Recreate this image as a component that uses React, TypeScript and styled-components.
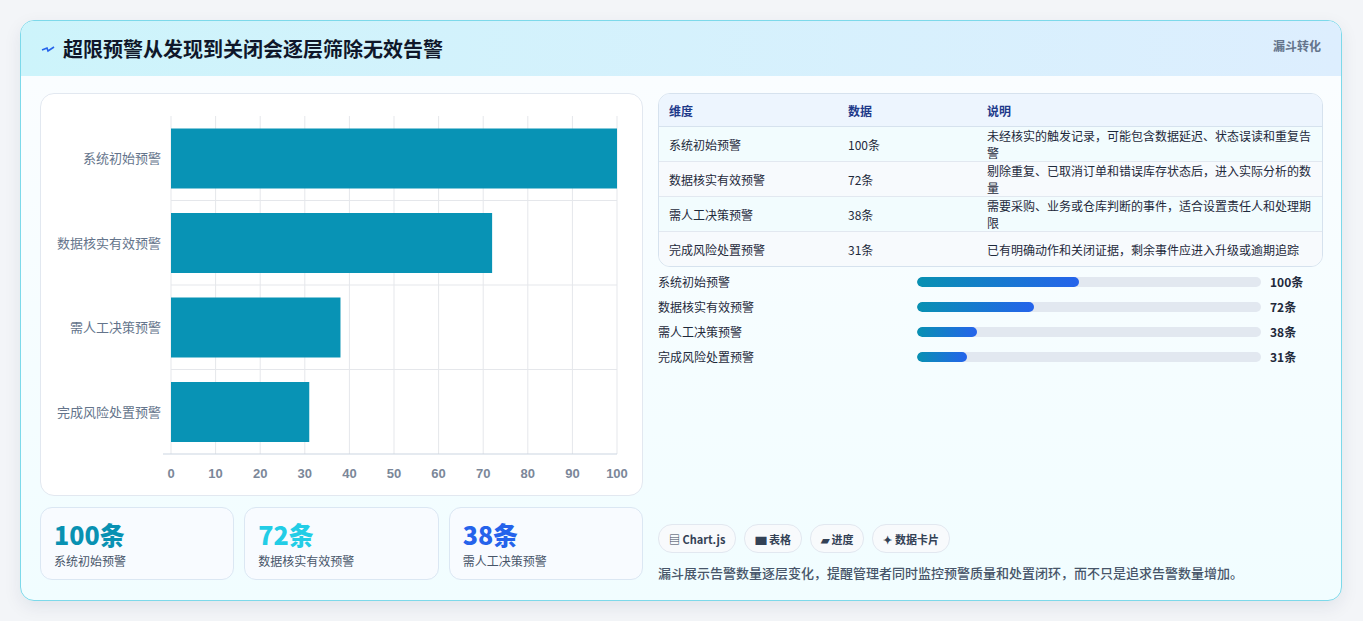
import React from "react";
import styled, { createGlobalStyle } from "styled-components";

const rows = [
  { name: "系统初始预警", value: 100, note: "未经核实的触发记录，可能包含数据延迟、状态误读和重复告警", pct: 47 },
  { name: "数据核实有效预警", value: 72, note: "剔除重复、已取消订单和错误库存状态后，进入实际分析的数量", pct: 34 },
  { name: "需人工决策预警", value: 38, note: "需要采购、业务或仓库判断的事件，适合设置责任人和处理期限", pct: 17.5 },
  { name: "完成风险处置预警", value: 31, note: "已有明确动作和关闭证据，剩余事件应进入升级或逾期追踪", pct: 14.5 },
];

const Global = createGlobalStyle`
  body { margin: 0; background: #f3f5f8; font-family: "Noto Sans CJK SC", "Noto Sans", sans-serif; }
`;

const Page = styled.div`
  height: 621px;
  padding: 20px 21px 0 20px;
  box-sizing: border-box;
`;
const Card = styled.div`
  height: 579px;
  border: 1px solid #7dd9ea;
  border-radius: 14px;
  overflow: hidden;
  background: linear-gradient(180deg, #fbfdff 0%, #f1fdff 100%);
  box-shadow: 0 6px 18px rgba(15, 40, 80, 0.08);
  display: flex;
  flex-direction: column;
`;
const Header = styled.div`
  height: 55px;
  flex-shrink: 0;
  display: flex;
  align-items: center;
  justify-content: space-between;
  padding: 0 20px 0 20px;
  background: linear-gradient(90deg, #cdf4fb 0%, #ddeefe 100%);
`;
const Title = styled.h1`
  margin: 0;
  font-size: 20px;
  font-weight: 700;
  color: #0f172a;
  display: flex;
  align-items: center;
  gap: 8px;
`;
const Tag = styled.span`
  font-size: 12px;
  font-weight: 700;
  color: #64748b;
  align-self: flex-start;
  margin-top: 16px;
`;
const Body = styled.div`
  flex: 1;
  display: grid;
  grid-template-columns: 603px 1fr;
  gap: 15px;
  padding: 17px 18px 18px 19px;
`;
const Col = styled.div`
  display: flex;
  flex-direction: column;
  gap: 11px;
`;
const ChartBox = styled.div`
  height: 403px;
  background: #fff;
  border: 1px solid #e2e8f0;
  border-radius: 14px;
  box-sizing: border-box;
`;
const Kpis = styled.div`
  display: grid;
  grid-template-columns: repeat(3, 1fr);
  gap: 10px;
`;
const Kpi = styled.div`
  height: 73px;
  box-sizing: border-box;
  border: 1px solid #dbe7f3;
  border-radius: 12px;
  background: #f8fbff;
  padding: 10px 13px;
`;
const KpiVal = styled.div<{ $c: string }>`
  font-size: 25px;
  font-weight: 800;
  line-height: 32px;
  color: ${(p) => p.$c};
  font-family: "Noto Sans CJK SC", sans-serif;
`;
const KpiLabel = styled.div`
  font-size: 12px;
  color: #475569;
  margin-top: 2px;
`;
const Table = styled.table`
  width: 100%;
  border-collapse: separate;
  border-spacing: 0;
  border: 1px solid #d6e2ee;
  border-radius: 12px;
  overflow: hidden;
  font-size: 12px;
  color: #1e293b;
`;
const Th = styled.th<{ $w?: number }>`
  text-align: left;
  font-weight: 700;
  color: #1e3a8a;
  height: 32px;
  padding: 0 10px;
  background: #edf5fe;
  border-bottom: 1px solid #d6e2ee;
  width: ${(p) => (p.$w ? p.$w + "px" : "auto")};
`;
const Td = styled.td<{ $alt: boolean; $last: boolean }>`
  height: 34px;
  padding: 0 10px;
  background: ${(p) => (p.$alt ? "#f7fafd" : "#f2fcfe")};
  border-bottom: ${(p) => (p.$last ? "none" : "1px solid #e2e8f0")};
`;
const Progress = styled.div`
  display: flex;
  flex-direction: column;
  gap: 9px;
  margin-top: 6px;
`;
const PRow = styled.div`
  display: grid;
  grid-template-columns: 250px 344px 1fr;
  gap: 9px;
  align-items: center;
  font-size: 12px;
  color: #1e293b;
  height: 16px;
`;
const Track = styled.div`
  height: 10px;
  border-radius: 5px;
  background: #e2e8f0;
  overflow: hidden;
`;
const Fill = styled.div`
  height: 100%;
  border-radius: 5px;
  background: linear-gradient(90deg, #0891b2, #2563eb);
`;
const PVal = styled.span`
  font-weight: 700;
`;
const Spacer = styled.div`
  flex: 1;
`;
const Chips = styled.div`
  display: flex;
  gap: 8px;
`;
const Chip = styled.span`
  height: 27px;
  padding: 0 10px;
  display: inline-flex;
  align-items: center;
  gap: 4px;
  border: 1px solid #e2e8f0;
  border-radius: 14px;
  background: #f8fafc;
  font-size: 11px;
  font-weight: 700;
  color: #334155;
`;
const Note = styled.p`
  margin: 10px 0 0;
  font-size: 13px;
  font-weight: 500;
  color: #475569;
`;

function Chart() {
  const x0 = 130, x1 = 576, y0 = 22, band = 84.5;
  const ticks = [0, 10, 20, 30, 40, 50, 60, 70, 80, 90, 100];
  const sx = (v: number) => x0 + ((x1 - x0) * v) / 100;
  return (
    <svg width="601" height="401" style={{ display: "block" }}>
      {ticks.map((t) => (
        <line key={t} x1={sx(t)} x2={sx(t)} y1={y0} y2={y0 + band * 4} stroke="#e5e7eb" />
      ))}
      {[1, 2, 3].map((i) => (
        <line key={i} x1={x0} x2={x1} y1={y0 + band * i} y2={y0 + band * i} stroke="#e5e7eb" />
      ))}
      <line x1={x0 - 8} x2={x1} y1={y0 + band * 4} y2={y0 + band * 4} stroke="#cbd5e1" />
      {rows.map((r, i) => (
        <g key={r.name}>
          <rect x={x0} y={y0 + band * i + 12.5} width={sx(r.value) - x0} height={60} fill="#0893b5" />
          <text x={x0 - 10} y={y0 + band * i + 47} textAnchor="end" fontSize="13" fill="#64748b">
            {r.name}
          </text>
        </g>
      ))}
      {ticks.map((t) => (
        <text key={t} x={sx(t)} y={y0 + band * 4 + 24} textAnchor="middle" fontSize="13" fontWeight="700" fill="#7b8799" fontFamily="Liberation Sans, sans-serif">
          {t}
        </text>
      ))}
    </svg>
  );
}

export default function App() {
  return (
    <Page>
      <Global />
      <Card>
        <Header>
          <Title>
            <svg width="14" height="10" viewBox="0 0 14 10">
              <path d="M1 6 L6 4 L7 7 L13 3" stroke="#2563eb" strokeWidth="1.6" fill="none" />
            </svg>
            超限预警从发现到关闭会逐层筛除无效告警
          </Title>
          <Tag>漏斗转化</Tag>
        </Header>
        <Body>
          <Col>
            <ChartBox>
              <Chart />
            </ChartBox>
            <Kpis>
              <Kpi>
                <KpiVal $c="#0891b2">100条</KpiVal>
                <KpiLabel>系统初始预警</KpiLabel>
              </Kpi>
              <Kpi>
                <KpiVal $c="#22cde6">72条</KpiVal>
                <KpiLabel>数据核实有效预警</KpiLabel>
              </Kpi>
              <Kpi>
                <KpiVal $c="#2563eb">38条</KpiVal>
                <KpiLabel>需人工决策预警</KpiLabel>
              </Kpi>
            </Kpis>
          </Col>
          <Col style={{ gap: 0 }}>
            <Table>
              <thead>
                <tr>
                  <Th $w={159}>维度</Th>
                  <Th $w={119}>数据</Th>
                  <Th>说明</Th>
                </tr>
              </thead>
              <tbody>
                {rows.map((r, i) => (
                  <tr key={r.name}>
                    <Td $alt={i % 2 === 1} $last={i === 3}>{r.name}</Td>
                    <Td $alt={i % 2 === 1} $last={i === 3}>{r.value}条</Td>
                    <Td $alt={i % 2 === 1} $last={i === 3}>{r.note}</Td>
                  </tr>
                ))}
              </tbody>
            </Table>
            <Progress>
              {rows.map((r) => (
                <PRow key={r.name}>
                  <span>{r.name}</span>
                  <Track>
                    <Fill style={{ width: r.pct + "%" }} />
                  </Track>
                  <PVal>{r.value}条</PVal>
                </PRow>
              ))}
            </Progress>
            <Spacer />
            <Chips>
              <Chip>▤ Chart.js</Chip>
              <Chip>▆ 表格</Chip>
              <Chip>▰ 进度</Chip>
              <Chip>✦ 数据卡片</Chip>
            </Chips>
            <Note>漏斗展示告警数量逐层变化，提醒管理者同时监控预警质量和处置闭环，而不只是追求告警数量增加。</Note>
          </Col>
        </Body>
      </Card>
    </Page>
  );
}
